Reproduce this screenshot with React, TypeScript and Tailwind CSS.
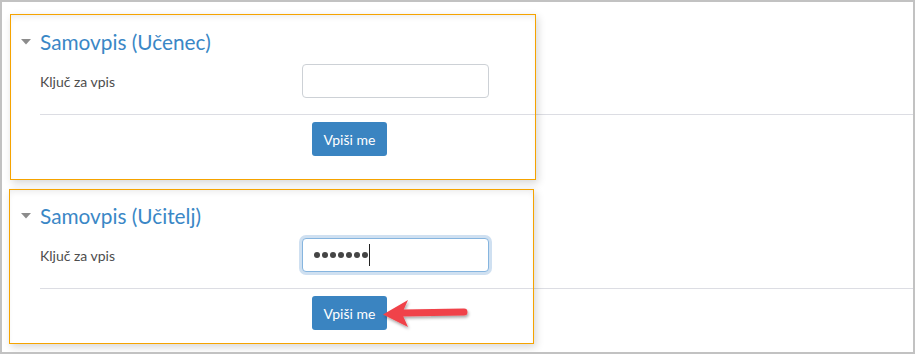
import React from "react";

function Caret() {
  return (
    <svg width="10" height="6" viewBox="0 0 10 6" className="block">
      <path d="M0 0 L10 0 L5 5.5 Z" fill="#8c8c8c" />
    </svg>
  );
}

function Section({
  title,
  focused,
  mtTitle,
}: {
  title: string;
  focused?: boolean;
  mtTitle: string;
}) {
  return (
    <div className={mtTitle}>
      <div className="flex items-center h-[28px]">
        <div className="w-[19px] ml-[19px] flex items-center">
          <Caret />
        </div>
        <span className="text-[20.8px] leading-[28px] text-[#3a87c6]">{title}</span>
      </div>
      <div className="flex items-center h-[34px] mt-[8px] pl-[38px]">
        <span className="w-[262px] text-[14px] text-[#4d4d4d]">Ključ za vpis</span>
        {focused ? (
          <div className="w-[187px] h-[34px] rounded-[4px] border border-[#86b5df] bg-white shadow-[0_0_0_3px_#cfe0f1] flex items-center pl-[11px]">
            <div className="flex gap-[2px]">
              {Array.from({ length: 7 }).map((_, i) => (
                <span key={i} className="w-[6px] h-[6px] rounded-full bg-[#454545] block" />
              ))}
            </div>
            <span className="ml-[1px] w-px h-[22px] bg-[#222] block" />
          </div>
        ) : (
          <div className="w-[187px] h-[34px] rounded-[4px] border border-[#cdd1d6] bg-white" />
        )}
      </div>
      <div className="ml-[38px] mt-[16px] h-px bg-[#dcdde3]" />
      <div className="pl-[310px] mt-[7px]">
        <div className="relative w-[75px] h-[34px] rounded-[3px] bg-[#3a84c1] text-white text-[14px] flex items-center justify-center">
          Vpiši me
        </div>
      </div>
    </div>
  );
}

export default function App() {
  return (
    <div
      className="relative w-[915px] h-[354px] border-2 border-[#c2c2c2] bg-white overflow-hidden"
      style={{ fontFamily: '"Lato", "Open Sans", sans-serif' }}
    >
      <Section title="Samovpis (Učenec)" mtTitle="mt-[26px]" />
      <Section title="Samovpis (Učitelj)" focused mtTitle="mt-[46px]" />

      {/* highlight boxes */}
      <div className="absolute left-[8px] top-[12px] w-[526px] h-[166px] border-[1.5px] border-[#f5a300] shadow-[2px_3px_8px_rgba(0,0,0,0.16),inset_0_4px_6px_-2px_rgba(0,0,0,0.08)] pointer-events-none" />
      <div className="absolute left-[7px] top-[187px] w-[525px] h-[155px] border-[1.5px] border-[#f5a300] shadow-[2px_3px_8px_rgba(0,0,0,0.16),inset_0_4px_6px_-2px_rgba(0,0,0,0.08)] pointer-events-none" />

      {/* red arrow */}
      <svg
        className="absolute left-[378px] top-[294px] pointer-events-none"
        width="96"
        height="36"
        viewBox="0 0 96 36"
      >
        <defs>
          <filter id="ash" x="-20%" y="-30%" width="140%" height="180%">
            <feDropShadow dx="1" dy="2" stdDeviation="1.5" floodColor="#000" floodOpacity="0.35" />
          </filter>
        </defs>
        <g filter="url(#ash)">
          <line x1="22" y1="17" x2="84" y2="16" stroke="#f0434a" strokeWidth="7" strokeLinecap="round" />
          <path d="M3 18.5 L28 4 L22 17.5 L28 31 Z" fill="#f0434a" />
        </g>
      </svg>
    </div>
  );
}
